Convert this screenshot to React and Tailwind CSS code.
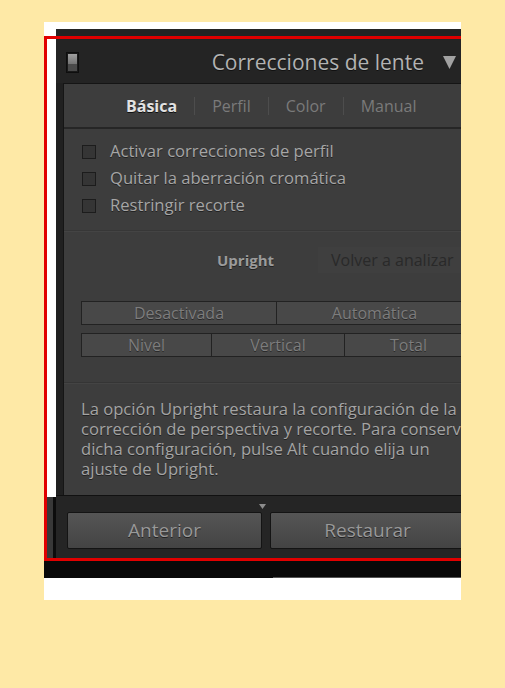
import React from 'react'

const font = { fontFamily: '"Open Sans", Lato, Arial, sans-serif' }

const Check = ({ label }) => (
    <div className="flex items-center h-[27px]">
        <div className="w-[14px] h-[14px] ml-[18px] bg-[#353535] border border-[#1c1c1c]"></div>
        <span className="ml-[14px] text-[16.6px] text-[#a6a6a6] [text-shadow:0_1px_0_#222]">{label}</span>
    </div>
)

const Seg = ({ label, className }) => (
    <div className={'flex items-center justify-center h-full bg-[#484848] border border-[#222] text-[16px] text-[#7d7d7d] [text-shadow:0_1px_0_#2a2a2a] ' + className}>
        {label}
    </div>
)

const App = () => {
    return (
        <div className="w-[505px] h-[688px] bg-[#fee9a6] pt-[22px] pl-[44px] overflow-hidden" style={font}>
            <div className="relative w-[417px] h-[578px] bg-white overflow-hidden">
                <div className="flex mt-[7px] h-[532px]">
                    {/* left gutter */}
                    <div className="flex flex-col w-[12px] shrink-0">
                        <div className="h-[468px] bg-white"></div>
                        <div className="flex-1 bg-[#383838] border-r-[3px] border-[#0c0c0c]"></div>
                    </div>

                    {/* lightroom panel */}
                    <div className="flex flex-col w-[405px] bg-[#202020] overflow-hidden">
                        {/* header */}
                        <div className="flex items-center h-[54px] pt-[13px] shrink-0 bg-[#242424]">
                            <div className="ml-[10px] w-[13px] h-[21px] border border-[#0e0e0e] bg-[#1a1a1a] p-[1px] flex flex-col">
                                <div className="h-[10px] bg-gradient-to-b from-[#a0a0a0] to-[#747474]"></div>
                                <div className="flex-1 bg-[#4a4a4a]"></div>
                            </div>
                            <div className="flex-1 text-right text-[21px] text-[#b3b3b3] pr-[19px] leading-none [text-shadow:0_1px_0_#111]">
                                Correcciones de lente
                            </div>
                            <svg width="13" height="13" viewBox="0 0 13 13" className="mr-[5px]">
                                <polygon points="0,0 13,0 6.5,13" fill="#a2a2a2" />
                            </svg>
                        </div>

                        {/* panel body */}
                        <div className="ml-[7px] w-[430px] h-[412px] shrink-0 bg-[#3d3d3d] border-t border-l border-[#151515] flex flex-col">
                            {/* tabs */}
                            <div className="flex items-center h-[45px] shrink-0 border-b-2 border-[#262626] text-[16px] pl-[62px]">
                                <span className="text-[#e2e2e2] font-bold [text-shadow:0_1px_0_#111]">Básica</span>
                                <span className="w-px h-[18px] bg-[#4d4d4d] mx-[17px]"></span>
                                <span className="text-[#7a7a7a]">Perfil</span>
                                <span className="w-px h-[18px] bg-[#4d4d4d] mx-[17px]"></span>
                                <span className="text-[#7a7a7a]">Color</span>
                                <span className="w-px h-[18px] bg-[#4d4d4d] mx-[17px]"></span>
                                <span className="text-[#7a7a7a]">Manual</span>
                            </div>

                            {/* checkboxes */}
                            <div className="flex flex-col pt-[9px] h-[102px] shrink-0 border-b border-[#373737]">
                                <Check label="Activar correcciones de perfil" />
                                <Check label="Quitar la aberración cromática" />
                                <Check label="Restringir recorte" />
                            </div>

                            {/* upright */}
                            <div className="flex flex-col h-[152px] shrink-0 border-t border-[#444] border-b border-b-[#353535]">
                                <div className="flex items-center h-[26px] mt-[15px] text-[15px]">
                                    <span className="ml-[153px] font-bold text-[#9b9b9b] [text-shadow:0_1px_0_#222]">Upright</span>
                                    <span className="ml-[44px] px-[13px] h-full flex items-center bg-[#3f3f3f] text-[16px] text-[#292929] whitespace-nowrap">Volver a analizar</span>
                                </div>
                                <div className="flex flex-col gap-[8px] ml-[17px] w-[392px] mt-[28px]">
                                    <div className="flex h-[24px]">
                                        <Seg label="Desactivada" className="w-[196px]" />
                                        <Seg label="Automática" className="flex-1 border-l-0" />
                                    </div>
                                    <div className="flex h-[24px]">
                                        <Seg label="Nivel" className="w-[131px]" />
                                        <Seg label="Vertical" className="w-[133px] border-l-0" />
                                        <Seg label="Total" className="flex-1 border-l-0" />
                                    </div>
                                </div>
                            </div>

                            {/* info */}
                            <div className="flex-1 border-t border-[#444] pt-[15px] pl-[17px]">
                                <p className="text-[16.6px] leading-[20px] text-[#a4a4a4] whitespace-nowrap [text-shadow:0_1px_0_#222]">
                                    La opción Upright restaura la configuración de la<br />
                                    corrección de perspectiva y recorte. Para conservar<br />
                                    dicha configuración, pulse Alt cuando elija un<br />
                                    ajuste de Upright.
                                </p>
                            </div>
                        </div>

                        {/* footer */}
                        <div className="flex flex-col flex-1 bg-[#252525] border-t border-[#111]">
                            <div className="flex justify-center h-[16px] w-[412px] pt-[8px]">
                                <svg width="7" height="5" viewBox="0 0 7 5">
                                    <polygon points="0,0 7,0 3.5,5" fill="#8c8c8c" />
                                </svg>
                            </div>
                            <div className="flex gap-[8px] ml-[11px] h-[37px]">
                                <div className="w-[195px] shrink-0 flex items-center justify-center bg-gradient-to-b from-[#555] to-[#444] border border-[#141414] rounded-[2px] text-[19px] text-[#999] [text-shadow:0_1px_0_#222]">
                                    Anterior
                                </div>
                                <div className="w-[195px] shrink-0 flex items-center justify-center bg-gradient-to-b from-[#555] to-[#444] border border-[#141414] rounded-[2px] text-[19px] text-[#999] [text-shadow:0_1px_0_#222]">
                                    Restaurar
                                </div>
                            </div>
                        </div>
                    </div>
                </div>

                {/* bottom black band */}
                <div className="flex flex-col h-[17px] bg-[#090909]">
                    <div className="flex-1"></div>
                    <div className="h-px ml-[229px] bg-[#555]"></div>
                </div>

                {/* red annotation frame */}
                <div className="absolute left-0 top-[14px] w-[430px] h-[525px] border-[3px] border-[#e10000] pointer-events-none"></div>
            </div>
        </div>
    )
}

export default App
